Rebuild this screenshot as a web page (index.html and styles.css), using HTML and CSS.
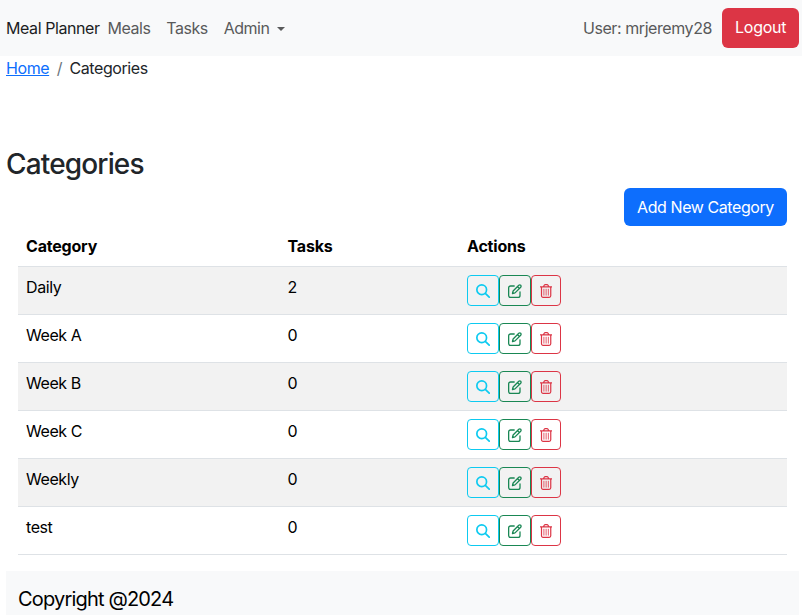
FILE: index.html
```html
<!DOCTYPE html>
<html lang="en">
<head>
<meta charset="utf-8">
<title>Categories - Meal Planner</title>
<link rel="stylesheet" href="styles.css">
</head>
<body>
<svg class="sprite" aria-hidden="true">
  <symbol id="search" viewBox="0 0 14 14"><circle cx="5.7" cy="5.700" r="4.850"/><path d="M9.300 9.300 13.200 13.200"/></symbol>
  <symbol id="edit" viewBox="0 0 14 14"><path d="M6.200 2H2.600A1.950 1.950 0 0 0 .65 3.950v7.450a1.950 1.950 0 0 0 1.950 1.950h7.450A1.950 1.950 0 0 0 12 11.400V7.800M4.500 9.500l.6-2.500 5.700-5.700a1.280 1.280 0 0 1 1.900 1.900L7 8.900zM9.500 2.600l1.900 1.900"/></symbol>
  <symbol id="trash" viewBox="0 0 12.250 14"><path d="M.4 2.800h11.450M3.500 2.600l.9-1.600q.25-.4.800-.4h1.850q.55 0 .8.400l.9 1.600M1.500 3v8.800a1.550 1.550 0 0 0 1.550 1.550h6.150a1.550 1.550 0 0 0 1.550-1.550V3"/><path class="thin" d="M3.900 5.200v6M6.125 5.200v6M8.350 5.200v6"/></symbol>
</svg>
<nav class="navbar">
  <a class="brand">Meal Planner</a>
  <a class="link">Meals</a>
  <a class="link">Tasks</a>
  <a class="link">Admin<span class="caret"></span></a>
  <span class="user">User: mrjeremy28</span>
  <button class="btn logout">Logout</button>
</nav>
<ol class="breadcrumb">
  <li><a href="#">Home</a></li>
  <li class="slash">/</li>
  <li>Categories</li>
</ol>
<h1>Categories</h1>
<main>
  <div class="toolbar"><button class="btn add">Add New Category</button></div>
  <table>
    <thead><tr><th class="name">Category</th><th class="count">Tasks</th><th>Actions</th></tr></thead>
    <tbody>
      <tr><td>Daily</td><td>2</td><td><div class="actions"><button class="info"><svg><use href="#search"/></svg></button><button class="success"><svg><use href="#edit"/></svg></button><button class="danger"><svg><use href="#trash"/></svg></button></div></td></tr>
      <tr><td>Week A</td><td>0</td><td><div class="actions"><button class="info"><svg><use href="#search"/></svg></button><button class="success"><svg><use href="#edit"/></svg></button><button class="danger"><svg><use href="#trash"/></svg></button></div></td></tr>
      <tr><td>Week B</td><td>0</td><td><div class="actions"><button class="info"><svg><use href="#search"/></svg></button><button class="success"><svg><use href="#edit"/></svg></button><button class="danger"><svg><use href="#trash"/></svg></button></div></td></tr>
      <tr><td>Week C</td><td>0</td><td><div class="actions"><button class="info"><svg><use href="#search"/></svg></button><button class="success"><svg><use href="#edit"/></svg></button><button class="danger"><svg><use href="#trash"/></svg></button></div></td></tr>
      <tr><td>Weekly</td><td>0</td><td><div class="actions"><button class="info"><svg><use href="#search"/></svg></button><button class="success"><svg><use href="#edit"/></svg></button><button class="danger"><svg><use href="#trash"/></svg></button></div></td></tr>
      <tr><td>test</td><td>0</td><td><div class="actions"><button class="info"><svg><use href="#search"/></svg></button><button class="success"><svg><use href="#edit"/></svg></button><button class="danger"><svg><use href="#trash"/></svg></button></div></td></tr>
    </tbody>
  </table>
</main>
<footer>Copyright @2024</footer>
</body>
</html>
```

FILE: styles.css
```css
* { box-sizing: border-box; }
html { overflow: hidden; }
body { margin: 0; font: 16px/24px Inter, sans-serif; letter-spacing: -0.42px; color: #212529; background: #fff; }
.sprite { display: none; }
button { font: inherit; letter-spacing: inherit; }
.navbar { display: flex; align-items: center; height: 56px; padding: 0 3px 0 6px; background: #f8f9fa; }
.brand { color: #1b1d1f; }
.link { padding: 0 8px; color: #595a5b; letter-spacing: -0.5px; }
.caret { display: inline-block; margin-left: 8px; vertical-align: 3px; border: 4px solid transparent; border-top-color: currentColor; border-bottom: 0; }
.user { margin-left: auto; margin-right: 10px; color: #595a5b; }
.btn { border: 0; border-radius: 6px; padding: 0 13px; height: 38px; color: #fff; white-space: nowrap; }
.logout { width: 77px; height: 40px; padding-bottom: 2px; background: #dc3545; letter-spacing: -0.25px; }
.breadcrumb { display: flex; gap: 8px; margin: 0; padding: 0 6px; list-style: none; }
.breadcrumb a { color: #0d6efd; }
.breadcrumb .slash { margin: 0 -0.5px; color: #6c757d; }
h1 { margin: 68px 6px 7px; font-size: 28px; line-height: 33px; font-weight: 500; letter-spacing: -0.85px; }
main { padding: 0 15px 0 18px; }
.toolbar { display: flex; justify-content: flex-end; }
.add { width: 163px; background: #0d6efd; }
table { width: 100%; table-layout: fixed; border-collapse: separate; border-spacing: 0; color: #000; }
th, td { padding: 8px; text-align: left; vertical-align: top; border-bottom: 1px solid #dee2e6; }
th { font-weight: 700; letter-spacing: -0.2px; }
.name { width: 261.500px; }
.count { width: 179.500px; }
tbody tr:nth-child(odd) { background: #f2f2f2; }
.actions { display: flex; height: 31px; }
.actions button { display: flex; align-items: center; justify-content: center; width: 32px; height: 31px; padding: 0; border: 1px solid; border-radius: 4px; background: none; }
.actions .info { color: #0dcaf0; }
.actions .success { color: #198754; }
.actions .danger { width: 30px; color: #dc3545; }
.actions svg { width: 14px; height: 14px; fill: none; stroke: currentColor; stroke-width: 1.3; stroke-linecap: round; stroke-linejoin: round; }
.actions .info svg { stroke-width: 1.7; }
.actions .danger svg { width: 12.25px; stroke-width: 1.2; }
.thin { stroke-width: 0.8; }
footer { height: 60px; margin: 16px 3px 0 6px; padding: 13px 12px; background: #f8f9fa; color: #000; font-size: 20px; line-height: 30px; letter-spacing: -0.82px; }
```
